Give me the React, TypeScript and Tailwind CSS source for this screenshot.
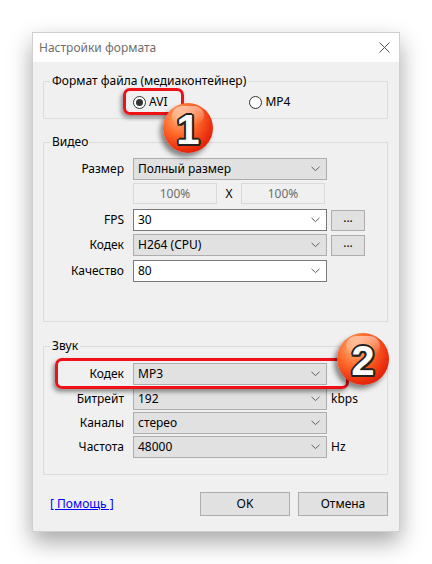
import React from "react";

const FONT = "font-['Noto_Sans','Open_Sans',sans-serif]";

function Chevron() {
  return (
    <svg width="9" height="6" viewBox="0 0 9 6" className="shrink-0">
      <path d="M0.5 0.8 L4.5 4.6 L8.5 0.8" fill="none" stroke="#5f5f5f" strokeWidth="1" />
    </svg>
  );
}

function Combo({ value, white = false }: { value: string; white?: boolean }) {
  return (
    <div
      className={`w-[194px] h-[22px] flex items-center justify-between pl-[4px] pr-[6px] border ${
        white ? "bg-white border-[#7a7a7a]" : "bg-[#e1e1e1] border-[#adadad]"
      }`}
    >
      <span className="text-[12px] leading-none text-black">{value}</span>
      <Chevron />
    </div>
  );
}

function Row({ label, children, className = "" }: { label: string; children: React.ReactNode; className?: string }) {
  return (
    <div className={`flex items-center ${className}`}>
      <span className="w-[80px] text-right text-[12px] leading-none text-black">{label}</span>
      <div className="ml-[9px] flex items-center gap-[4px]">{children}</div>
    </div>
  );
}

function DotsButton() {
  return (
    <div className="w-[34px] h-[21px] bg-[#e1e1e1] border border-[#adadad] flex items-center justify-center text-[12px] leading-none pb-[4px]">
      ...
    </div>
  );
}

function Radio({ checked, label }: { checked?: boolean; label: string }) {
  return (
    <div className="flex items-center gap-[3px]">
      <div className="w-[13px] h-[13px] rounded-full border border-[#333] bg-white flex items-center justify-center">
        {checked && <div className="w-[7px] h-[7px] rounded-full bg-[#333]" />}
      </div>
      <span className="text-[12px] leading-none text-black">{label}</span>
    </div>
  );
}

function Badge({ n, className }: { n: string; className: string }) {
  return (
    <div
      className={`absolute rounded-full flex items-center justify-center bg-[radial-gradient(circle_at_35%_30%,#ffb27a_0%,#ff6a2a_35%,#e8290c_70%,#b81806_100%)] shadow-[-3px_4px_5px_rgba(0,0,0,0.45)] ${className}`}
    >
      <div className="absolute left-[18%] top-[6%] w-[64%] h-[38%] rounded-full bg-gradient-to-b from-white/50 to-white/0" />
      <span className="relative mt-[4px] font-['Liberation_Sans',sans-serif] font-bold text-[42px] leading-none text-white [text-shadow:2px_0_0_#222,-2px_0_0_#222,0_2px_0_#222,0_-2px_0_#222,1.5px_1.5px_0_#222,-1.5px_-1.5px_0_#222,1.5px_-1.5px_0_#222,-1.5px_1.5px_0_#222]">
        {n}
      </span>
    </div>
  );
}

export default function App() {
  return (
    <div className={`w-[432px] h-[564px] bg-white pt-[32px] pl-[32px] ${FONT}`}>
      <div className="relative w-[368px] h-[500px] bg-[#f0f0f0] border border-[#d0d0d0] shadow-[0_10px_22px_rgba(0,0,0,0.35)] flex flex-col">
        {/* Title bar */}
        <div className="h-[29px] bg-white flex items-center justify-between pl-[6px] pr-[9px] shrink-0">
          <span className="text-[12px] leading-none text-[#6e6e6e]">Настройки формата</span>
          <svg width="11" height="11" viewBox="0 0 11 11">
            <path d="M0.5 0.5 L10.5 10.5 M10.5 0.5 L0.5 10.5" stroke="#555" strokeWidth="1" />
          </svg>
        </div>

        <div className="pl-[10px] pr-[11px] flex flex-col">
          {/* Format */}
          <fieldset className="mt-[11px] border border-[#dcdcdc] h-[46px]">
            <legend className="ml-[6px] px-[2px] text-[12px] leading-[16px] text-black">
              Формат файла (медиаконтейнер)
            </legend>
            <div className="flex items-center h-[26px] pl-[89px]">
              <Radio checked label="AVI" />
              <div className="ml-[82px]">
                <Radio label="MP4" />
              </div>
            </div>
          </fieldset>

          {/* Video */}
          <fieldset className="mt-[15px] border border-[#dcdcdc] h-[188px]">
            <legend className="ml-[6px] px-[2px] text-[12px] leading-[16px] text-black">Видео</legend>
            <div className="pt-[8px] flex flex-col">
              <Row label="Размер">
                <Combo value="Полный размер" />
              </Row>
              <div className="flex items-center mt-[3px] ml-[89px]">
                <div className="w-[84px] h-[21px] border border-[#d9d9d9] flex items-center justify-center text-[12px] leading-none text-[#6d6d6d]">
                  100%
                </div>
                <span className="w-[24px] text-center text-[12px] leading-none text-black">X</span>
                <div className="w-[84px] h-[21px] border border-[#d9d9d9] flex items-center justify-center text-[12px] leading-none text-[#6d6d6d]">
                  100%
                </div>
              </div>
              <Row label="FPS" className="mt-[5px]">
                <Combo value="30" white />
                <DotsButton />
              </Row>
              <Row label="Кодек" className="mt-[3px]">
                <Combo value="H264 (CPU)" />
                <DotsButton />
              </Row>
              <Row label="Качество" className="mt-[4px]">
                <Combo value="80" white />
              </Row>
            </div>
          </fieldset>

          {/* Sound */}
          <fieldset className="mt-[16px] border border-[#dcdcdc] h-[137px]">
            <legend className="ml-[6px] px-[2px] text-[12px] leading-[16px] text-black">Звук</legend>
            <div className="pt-[9px] flex flex-col">
              <Row label="Кодек">
                <Combo value="MP3" />
              </Row>
              <Row label="Битрейт" className="mt-[3px]">
                <Combo value="192" />
                <span className="text-[12px] leading-none text-black">kbps</span>
              </Row>
              <Row label="Каналы" className="mt-[2px]">
                <Combo value="стерео" />
              </Row>
              <Row label="Частота" className="mt-[2px]">
                <Combo value="48000" />
                <span className="text-[12px] leading-none text-black">Hz</span>
              </Row>
            </div>
          </fieldset>

          {/* Footer */}
          <div className="mt-[17px] flex items-center h-[24px]">
            <span className="ml-[7px] text-[12px] leading-none text-[#0000ff] underline">[ Помощь ]</span>
            <div className="ml-auto flex gap-[8px]">
              <div className="w-[90px] h-[24px] bg-[#e1e1e1] border border-[#adadad] flex items-center justify-center text-[12px] leading-none">
                OK
              </div>
              <div className="w-[90px] h-[24px] bg-[#e1e1e1] border border-[#adadad] flex items-center justify-center text-[12px] leading-none">
                Отмена
              </div>
            </div>
          </div>
        </div>

        {/* Callouts */}
        <div className="absolute left-[90px] top-[55px] w-[61px] h-[27px] border-[3px] border-[#f01018] rounded-[7px] shadow-[-2px_3px_4px_rgba(0,0,0,0.4)]" />
        <Badge n="1" className="left-[130px] top-[70px] w-[50px] h-[50px]" />
        <div className="absolute left-[22px] top-[325px] w-[294px] h-[31px] border-[3px] border-[#f01018] rounded-[7px] shadow-[-2px_3px_4px_rgba(0,0,0,0.4)]" />
        <Badge n="2" className="left-[304px] top-[300px] w-[52px] h-[52px]" />
      </div>
    </div>
  );
}
